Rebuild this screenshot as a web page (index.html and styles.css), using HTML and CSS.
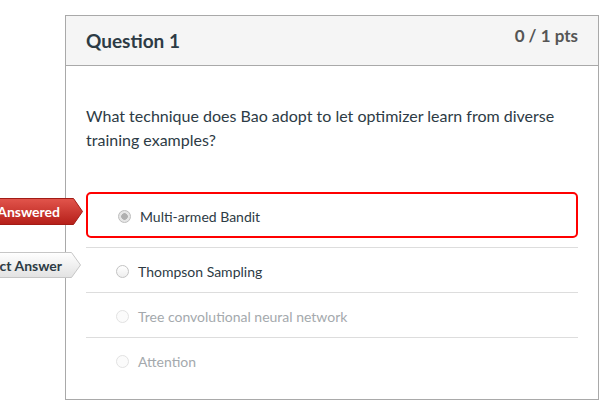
FILE: index.html
```html
<!DOCTYPE html>
<html lang="en">
<head>
<meta charset="utf-8">
<title>Question 1</title>
<link rel="stylesheet" href="styles.css">
</head>
<body>
<div class="page">
  <div class="card">
    <div class="header">
      <h2 class="qname">Question 1</h2>
      <div class="pts">0 / 1 pts</div>
    </div>
    <div class="body">
      <p class="qtext">What technique does Bao adopt to let optimizer learn from diverse training examples?</p>
      <div class="answers">
        <div class="answer selected">
          <div class="tag tag-wrong">
            <svg class="tag-shape" width="140" height="27" viewBox="0 0 140 27">
              <defs>
                <linearGradient id="gWrong" x1="0" y1="0" x2="0" y2="1">
                  <stop offset="0" stop-color="#e2554c"/>
                  <stop offset="1" stop-color="#b51f19"/>
                </linearGradient>
              </defs>
              <polygon points="0.5,0.5 130.5,0.5 139.5,13.5 130.5,26.5 0.5,26.5" fill="url(#gWrong)" stroke="#a31b15" stroke-width="1"/>
            </svg>
            <span class="tag-text">You Answered</span>
          </div>
          <span class="radio checked"></span>
          <span class="label">Multi-armed Bandit</span>
        </div>
        <div class="answer">
          <div class="tag tag-correct">
            <svg class="tag-shape" width="140" height="26" viewBox="0 0 140 26">
              <defs>
                <linearGradient id="gCorrect" x1="0" y1="0" x2="0" y2="1">
                  <stop offset="0" stop-color="#ffffff"/>
                  <stop offset="1" stop-color="#e2e2e2"/>
                </linearGradient>
              </defs>
              <polygon points="0.5,0.5 130.5,0.5 139.5,13 130.5,25.5 0.5,25.5" fill="url(#gCorrect)" stroke="#c6c6c6" stroke-width="1"/>
            </svg>
            <span class="tag-text">Correct Answer</span>
          </div>
          <span class="radio"></span>
          <span class="label">Thompson Sampling</span>
        </div>
        <div class="answer faded">
          <span class="radio"></span>
          <span class="label">Tree convolutional neural network</span>
        </div>
        <div class="answer faded">
          <span class="radio"></span>
          <span class="label">Attention</span>
        </div>
      </div>
    </div>
  </div>
</div>
</body>
</html>
```

FILE: styles.css
```css
* {
  box-sizing: border-box;
}

html, body {
  margin: 0;
  background: #ffffff;
}

body {
  font-family: Lato, "Noto Sans", "Liberation Sans", sans-serif;
  color: #2d3b45;
}

.page {
  padding: 15px 0 0 65px;
}

.card {
  width: 534px;
  border: 1px solid #a9a9a9;
  background: #ffffff;
}

.header {
  height: 50px;
  background: #f5f5f5;
  border-bottom: 1px solid #a9a9a9;
  display: flex;
  justify-content: space-between;
  align-items: flex-start;
  padding: 0 20px 0 20px;
}

.qname {
  margin: 13px 0 0 0;
  font-size: 19px;
  line-height: 24px;
  font-weight: 700;
  color: #2d3b45;
}

.pts {
  margin-top: 10px;
  font-size: 17px;
  line-height: 20px;
  font-weight: 700;
  color: #555555;
}

.body {
  padding: 38px 20px 17px 20px;
}

.qtext {
  margin: 0;
  font-size: 16px;
  line-height: 24px;
  color: #2d3b45;
}

.answers {
  margin-top: 40px;
}

.answer {
  position: relative;
  height: 45px;
  border-top: 1px solid #dddddd;
  display: flex;
  align-items: center;
  padding: 3px 0 0 30px;
  font-size: 14px;
}

.answer.selected {
  height: 46px;
  border: 2px solid #ff0000;
  border-radius: 5px;
  margin-bottom: 9px;
}

.radio {
  width: 13px;
  height: 13px;
  border-radius: 50%;
  border: 1px solid #c3c3c3;
  background: linear-gradient(#ffffff, #eeeeee);
  flex: none;
  margin-right: 9px;
}

.radio.checked {
  border-color: #bdbdbd;
  background: radial-gradient(circle, #b0b0b0 0, #b0b0b0 3px, #e6e6e6 3.6px);
}

.faded .radio {
  border-color: #e2e2e2;
  background: #fbfbfb;
}

.label {
  line-height: 20px;
}

.faded .label {
  color: #a4a9ad;
}

.tag {
  position: absolute;
  top: 4px;
  left: -145px;
  width: 140px;
  height: 27px;
}

.tag-correct {
  height: 26px;
}

.tag-shape {
  display: block;
}

.tag-text {
  position: absolute;
  top: 0;
  bottom: 0;
  right: 23px;
  display: flex;
  align-items: center;
  font-size: 14px;
  font-weight: 700;
  white-space: nowrap;
}

.tag-wrong .tag-text {
  color: #ffffff;
}

.tag-correct .tag-text {
  right: 19px;
  color: #2d3b45;
}
```
